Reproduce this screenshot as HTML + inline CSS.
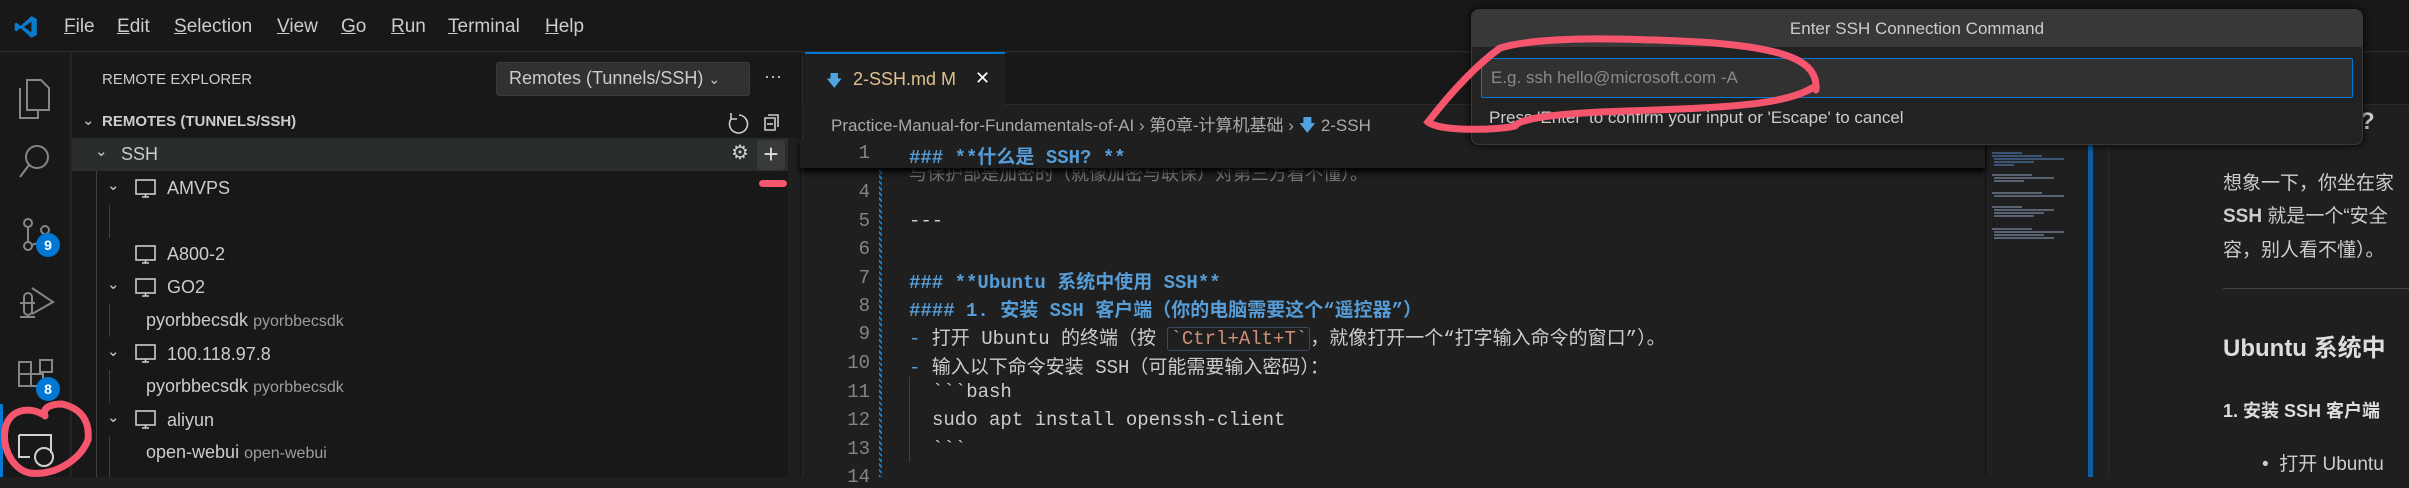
<!DOCTYPE html>
<html><head><meta charset="utf-8"><style>
*{margin:0;padding:0;box-sizing:border-box}
body{width:2409px;height:477px;overflow:hidden;background:#1f1f1f;font-family:"Liberation Sans","Noto Sans CJK SC",sans-serif;color:#ccc;position:relative}
.a{position:absolute;white-space:nowrap}
.mono{font-family:"Liberation Mono","Noto Sans CJK SC",monospace}
.h{color:#569cd6;font-weight:bold}
</style></head><body>
<!-- title bar -->
<div class="a" style="left:0;top:0;width:2409px;height:52px;background:#181818;border-bottom:1px solid #2b2b2b"></div>
<svg class="a" style="left:13px;top:14px" width="26" height="26" viewBox="0 0 24 24"><path d="M17 2 L22 4.5 V19.5 L17 22 L7 13 L3 16 L1.5 15 V9 L3 8 L7 11 Z M17 7 L10 12 L17 17 Z" fill="#0a7acc"/></svg>
<div class="a" style="top:16px;left:64px;font-size:19px;color:#ccc">
<span style="position:absolute;left:0"><u>F</u>ile</span><span style="position:absolute;left:53px"><u>E</u>dit</span><span style="position:absolute;left:110px"><u>S</u>election</span><span style="position:absolute;left:213px"><u>V</u>iew</span><span style="position:absolute;left:277px"><u>G</u>o</span><span style="position:absolute;left:327px"><u>R</u>un</span><span style="position:absolute;left:384px"><u>T</u>erminal</span><span style="position:absolute;left:481px"><u>H</u>elp</span></div>
<!-- activity bar -->
<div class="a" style="left:0;top:53px;width:71px;height:424px;background:#181818;border-right:1px solid #2b2b2b"></div>
<svg class="a" style="left:0;top:60px" width="71" height="417" fill="none" stroke="#868686" stroke-width="2">
<path d="M27 20 h14 l8 8 v22 h-22 z M20 28 v30 h18 v-8"/>
<circle cx="37" cy="97" r="11"/><path d="M29 105 L20 117"/>
<circle cx="28" cy="163" r="4"/><circle cx="45" cy="170" r="4"/><circle cx="28" cy="186" r="4"/><path d="M28 167 v15 M45 174 q0 8 -14 11"/>
<path d="M32 228 L53 242 L32 254 M20 243 h15 M20 257 h15 M24 237 a4 4 0 0 1 8 0 v14 a4 4 0 0 1 -8 0 z"/>
<path d="M19 302 h12 v12 h-12 z M19 314 h12 v12 h-12 z M31 314 h12 v12 h-12 z M40 300 h12 v12 h-12 z"/>
<path d="M19 375 h32 v18 M19 375 v22 h11" stroke="#d0d0d0"/><circle cx="44" cy="397" r="9" stroke="#d0d0d0"/>
</svg>
<div class="a" style="left:0;top:404px;width:3px;height:73px;background:#0078d4"></div>
<div class="a" style="left:36px;top:233px;width:24px;height:24px;border-radius:12px;background:#0078d4;color:#fff;font-size:14px;font-weight:bold;text-align:center;line-height:24px">9</div>
<div class="a" style="left:36px;top:377px;width:24px;height:24px;border-radius:12px;background:#0078d4;color:#fff;font-size:14px;font-weight:bold;text-align:center;line-height:24px">8</div>
<!-- sidebar -->
<div class="a" style="left:72px;top:53px;width:731px;height:424px;background:#181818;border-right:1px solid #2b2b2b"></div>
<div class="a" style="left:102px;top:71px;font-size:15px;color:#ccc">REMOTE EXPLORER</div>
<div class="a" style="left:496px;top:62px;width:254px;height:34px;background:#313131;border:1px solid #3c3c3c;border-radius:3px;font-size:18px;color:#ccc;padding:5px 0 0 12px">Remotes (Tunnels/SSH) <span style="font-size:14px">&#8964;</span></div>
<div class="a" style="left:764px;top:66px;font-size:18px;color:#ccc">···</div>
<div class="a" style="left:82px;top:111px;font-size:15px;color:#ccc">&#8964;</div>
<div class="a" style="left:102px;top:113px;font-size:15px;font-weight:bold;color:#ccc">REMOTES (TUNNELS/SSH)</div>
<svg class="a" style="left:725px;top:110px" width="60" height="26" fill="none" stroke="#ccc" stroke-width="1.6"><path d="M14 5 a9 9 0 1 1 -8 4 M6 3 v6 h6"/><path d="M40 8 h10 v12 h-10 z M43 5 h10 v12"/><path d="M42 14 h6"/></svg>
<div class="a" style="left:72px;top:138px;width:716px;height:33px;background:#2a2d2e"></div>
<div class="a" style="left:95px;top:142px;font-size:15px;color:#ccc">&#8964;</div>
<div class="a" style="left:121px;top:144px;font-size:18px;color:#ccc">SSH</div>
<div class="a" style="left:731px;top:140px;font-size:20px;color:#ccc">&#9881;</div>
<div class="a" style="left:757px;top:140px;width:28px;height:30px;background:#383a3c;border-radius:4px;color:#ddd;font-size:26px;text-align:center;line-height:28px">+</div>
<div class="a" style="left:759px;top:180px;width:28px;height:7px;background:#f5566e;border-radius:4px"></div>
<div class="a" style="left:788px;top:138px;width:12px;height:339px;background:#1f1f1f"></div>
<div class="a" style="left:96px;top:171px;width:1px;height:306px;background:#404040"></div>
<div class="a" style="left:109px;top:205px;width:1px;height:33px;background:#404040"></div>
<div class="a" style="left:109px;top:304px;width:1px;height:33px;background:#404040"></div>
<div class="a" style="left:109px;top:370px;width:1px;height:33px;background:#404040"></div>
<div class="a" style="left:109px;top:436px;width:1px;height:41px;background:#404040"></div>
<div style="font-size:18px;color:#ccc">
<div class="a" style="left:107px;top:176px;font-size:15px">&#8964;</div><div class="a" style="left:167px;top:178px">AMVPS</div>
<div class="a" style="left:167px;top:244px">A800-2</div>
<div class="a" style="left:107px;top:275px;font-size:15px">&#8964;</div><div class="a" style="left:167px;top:277px">GO2</div>
<div class="a" style="left:146px;top:310px">pyorbbecsdk <span style="color:#9d9d9d;font-size:16px">pyorbbecsdk</span></div>
<div class="a" style="left:107px;top:342px;font-size:15px">&#8964;</div><div class="a" style="left:167px;top:344px">100.118.97.8</div>
<div class="a" style="left:146px;top:376px">pyorbbecsdk <span style="color:#9d9d9d;font-size:16px">pyorbbecsdk</span></div>
<div class="a" style="left:107px;top:408px;font-size:15px">&#8964;</div><div class="a" style="left:167px;top:410px">aliyun</div>
<div class="a" style="left:146px;top:442px">open-webui <span style="color:#9d9d9d;font-size:16px">open-webui</span></div>
</div>
<svg class="a" style="left:134px;top:178px" width="24" height="260" fill="none" stroke="#ccc" stroke-width="1.6">
<g id="m"><rect x="2" y="2" width="19" height="14"/><path d="M8 19 h7 M11.5 16 v3"/></g>
<use href="#m" y="66"/><use href="#m" y="99"/><use href="#m" y="165"/><use href="#m" y="231"/>
</svg>
<!-- editor tabs -->
<div class="a" style="left:804px;top:53px;width:1605px;height:52px;background:#181818;border-bottom:1px solid #2b2b2b"></div>
<div class="a" style="left:805px;top:52px;width:200px;height:54px;background:#1f1f1f;border-top:2px solid #0078d4"></div>
<div class="a" style="left:826px;top:70px;color:#4fa3e0;font-size:16px">&#129095;</div>
<div class="a" style="left:853px;top:69px;font-size:18px;color:#e2c08d">2-SSH.md M</div>
<div class="a" style="left:975px;top:68px;font-size:18px;color:#fff">✕</div>
<div class="a" style="left:831px;top:111px;font-size:17px;color:#a9a9a9">Practice-Manual-for-Fundamentals-of-AI &#8250; 第0章-计算机基础 &#8250; <span style="color:#4fa3e0">&#129095;</span> 2-SSH</div>
<!-- code -->
<div class="a" style="left:800px;top:140px;width:1185px;height:28px;background:#1f1f1f;box-shadow:0 4px 6px #000;z-index:2"></div>
<div class="a" style="left:879px;top:168px;width:3px;height:309px;background:repeating-linear-gradient(45deg,#1b81c9 0 2px,#1f1f1f 2px 4px)"></div>
<div class="mono" style="font-size:19px;color:#858585">
<div class="a" style="left:850px;top:142px;z-index:3;width:20px;text-align:right">1</div>
<div class="a h" style="left:909px;top:142px;z-index:3">### **什么是 SSH? **</div>
<div class="a" style="left:909px;top:160px;color:#777;font-size:18px">与保护部是加密的（就像加密与联保）对第三方看不懂）。</div>
<div class="a" style="left:850px;top:181px;width:20px;text-align:right">4</div>
<div class="a" style="left:850px;top:210px;width:20px;text-align:right">5</div><div class="a" style="left:909px;top:210px;color:#ccc">---</div>
<div class="a" style="left:850px;top:238px;width:20px;text-align:right">6</div>
<div class="a" style="left:850px;top:267px;width:20px;text-align:right">7</div><div class="a h" style="left:909px;top:267px">### **Ubuntu 系统中使用 SSH**</div>
<div class="a" style="left:850px;top:295px;width:20px;text-align:right">8</div><div class="a h" style="left:909px;top:295px">#### 1. 安装 SSH 客户端（你的电脑需要这个“遥控器”）</div>
<div class="a" style="left:850px;top:323px;width:20px;text-align:right">9</div><div class="a" style="left:909px;top:323px;color:#ccc"><span style="color:#569cd6">-</span> 打开 Ubuntu 的终端（按 <span style="color:#ce9178;border:1px solid #3a4a5a;border-radius:3px;padding:0 2px">&#96;Ctrl+Alt+T&#96;</span>，就像打开一个“打字输入命令的窗口”）。</div>
<div class="a" style="left:840px;top:352px;width:30px;text-align:right">10</div><div class="a" style="left:909px;top:352px;color:#ccc"><span style="color:#569cd6">-</span> 输入以下命令安装 SSH（可能需要输入密码）：</div>
<div class="a" style="left:840px;top:381px;width:30px;text-align:right">11</div><div class="a" style="left:932px;top:381px;color:#ccc">&#96;&#96;&#96;bash</div>
<div class="a" style="left:840px;top:409px;width:30px;text-align:right">12</div><div class="a" style="left:932px;top:409px;color:#ccc">sudo apt install openssh-client</div>
<div class="a" style="left:840px;top:438px;width:30px;text-align:right">13</div><div class="a" style="left:932px;top:438px;color:#ccc">&#96;&#96;&#96;</div>
<div class="a" style="left:840px;top:466px;width:30px;text-align:right">14</div>
<div class="a" style="left:909px;top:377px;width:1px;height:85px;background:#404040"></div>
</div>
<!-- minimap -->
<div class="a" style="left:1985px;top:140px;width:105px;height:337px;background:#1f1f1f;border-left:1px solid #111"></div>
<svg class="a" style="left:1988px;top:145px" width="100" height="105"><g stroke-width="1.2">
<path d="M4 8h30 M4 11h50 M6 14h70 M6 17h40 M6 20h20" stroke="#4a78a8"/><path d="M4 30h40 M6 33h60 M6 36h30 M4 48h50 M6 51h70 M4 62h30 M6 65h60 M6 68h50 M6 71h40 M4 84h40 M6 87h70 M6 90h50 M6 93h60" stroke="#7a8aa0"/></g></svg>
<div class="a" style="left:2088px;top:140px;width:5px;height:337px;background:#0e5da0"></div>
<div class="a" style="left:2108px;top:53px;width:1px;height:424px;background:#2b2b2b"></div>
<!-- preview -->
<div class="a" style="left:2360px;top:108px;font-size:24px;color:#ccc;font-weight:bold">?</div>
<div class="a" style="left:2223px;top:168px;font-size:19px;color:#ccc">想象一下，你坐在家</div>
<div class="a" style="left:2223px;top:201px;font-size:19px;color:#ccc"><b>SSH</b> 就是一个“安全</div>
<div class="a" style="left:2223px;top:235px;font-size:19px;color:#ccc">容，别人看不懂）。</div>
<div class="a" style="left:2223px;top:288px;width:186px;height:1px;background:#454545"></div>
<div class="a" style="left:2223px;top:328px;font-size:24px;font-weight:bold;color:#ddd">Ubuntu 系统中</div>
<div class="a" style="left:2223px;top:397px;font-size:18px;font-weight:bold;color:#ddd">1. 安装 SSH 客户端</div>
<div class="a" style="left:2262px;top:449px;font-size:19px;color:#ccc">•&nbsp; 打开 Ubuntu</div>
<!-- dialog -->
<div class="a" style="left:1471px;top:9px;width:892px;height:136px;background:#222;border:1px solid #3a3a3a;border-radius:8px;overflow:hidden;box-shadow:0 0 8px #000;z-index:5">
<div style="height:37px;background:#383838;text-align:center;font-size:17px;color:#ccc;line-height:38px">Enter SSH Connection Command</div>
<div class="a" style="left:9px;top:48px;width:872px;height:40px;background:#313131;border:1px solid #0078d4;border-radius:2px;font-size:17px;color:#8a8a8a;padding:9px 0 0 9px">E.g. ssh hello@microsoft.com -A</div>
<div class="a" style="left:17px;top:98px;font-size:17px;color:#ccc">Press 'Enter' to confirm your input or 'Escape' to cancel</div>
</div>
<!-- annotations -->
<svg class="a" style="left:0;top:0;z-index:6" width="2409" height="477" fill="none" stroke="#f5566e" stroke-width="7" stroke-linecap="round">
<path d="M1816 90 C1818 62 1790 48 1700 42 C1620 38 1540 36 1500 48 C1470 70 1445 100 1428 122 C1440 132 1500 130 1515 126 C1520 118 1560 114 1600 112 C1700 108 1780 108 1812 88"/>
<path d="M42 414 C28 406 8 410 5 430 C2 450 14 470 30 473 C55 476 80 460 88 440 C90 420 80 408 62 404 C50 404 42 408 45 416"/>
</svg>
</body></html>
